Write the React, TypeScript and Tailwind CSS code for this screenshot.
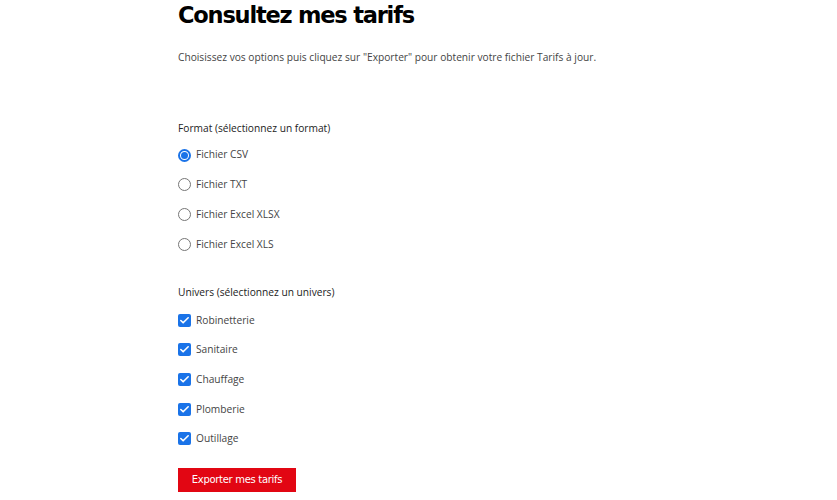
import {Check} from "lucide-react";

const formats = ["Fichier CSV", "Fichier TXT", "Fichier Excel XLSX", "Fichier Excel XLS"];
const univers = ["Robinetterie", "Sanitaire", "Chauffage", "Plomberie", "Outillage"];

export default function App() {
  return (
    <div className="w-[837px] h-[500px] bg-white overflow-hidden font-['Open_Sans',sans-serif] text-[#333]">
      <div className="pl-[178px]">
        <h1 className="font-['DejaVu_Sans',sans-serif] font-bold text-[22.5px] leading-[30px] text-black tracking-[-1.2px]">
          Consultez mes tarifs
        </h1>
        <p className="mt-[19px] text-[10.2px] leading-[16px] text-[#444]">
          Choisissez vos options puis cliquez sur "Exporter" pour obtenir votre fichier Tarifs à jour.
        </p>

        <div className="mt-[55px]">
          <div className="text-[10.2px] leading-[16px] text-[#222]">Format (sélectionnez un format)</div>
          <div className="mt-[11px] flex flex-col gap-[13.8px]">
            {formats.map((f, i) => (
              <label key={f} className="flex items-center gap-[5px] h-[16px] text-[10.2px] text-[#444]">
                {i === 0 ? (
                  <span className="w-[13px] h-[13px] rounded-full border-2 border-[#1a73e8] flex items-center justify-center">
                    <span className="w-[7px] h-[7px] rounded-full bg-[#1a73e8]" />
                  </span>
                ) : (
                  <span className="w-[13px] h-[13px] rounded-full border border-[#767676]" />
                )}
                {f}
              </label>
            ))}
          </div>
        </div>

        <div className="mt-[32px]">
          <div className="text-[10.2px] leading-[16px] text-[#222]">Univers (sélectionnez un univers)</div>
          <div className="mt-[12px] flex flex-col gap-[13.6px]">
            {univers.map((u) => (
              <label key={u} className="flex items-center gap-[5px] h-[16px] text-[10.2px] text-[#444]">
                <span className="w-[13px] h-[13px] rounded-[2px] bg-[#1a73e8] flex items-center justify-center">
                  <Check className="w-[11px] h-[11px] text-white" strokeWidth={3.5} />
                </span>
                {u}
              </label>
            ))}
          </div>
        </div>

        <button className="mt-[21px] w-[118px] h-[24px] bg-[#e20613] text-white text-[10px] font-['DejaVu_Sans',sans-serif] tracking-[-0.3px]">
          Exporter mes tarifs
        </button>
      </div>
    </div>
  );
}
